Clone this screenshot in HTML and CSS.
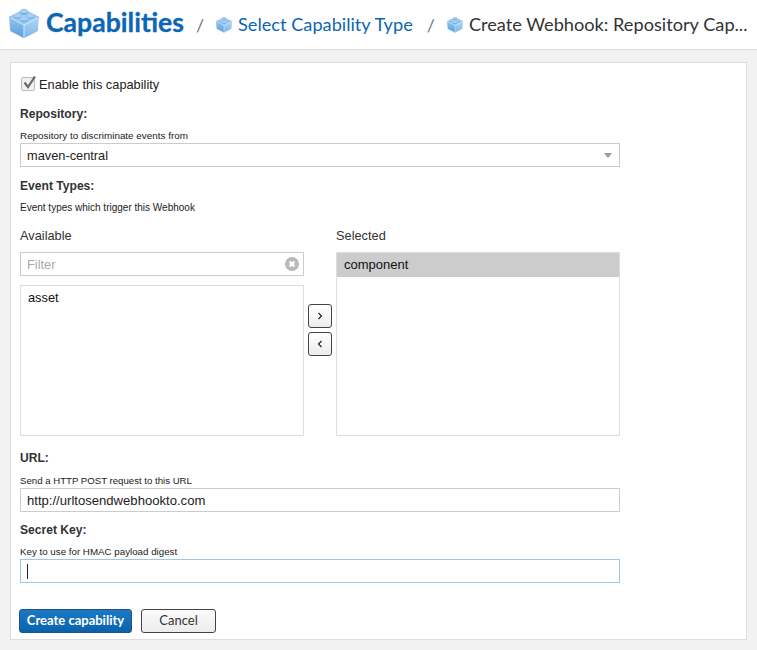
FILE: index.html
```html
<!DOCTYPE html>
<html lang="en">

<head>
    <meta charset="UTF-8">
    <title>Capabilities</title>
    <link rel="stylesheet" href="styles.css">
</head>

<body>
    <svg class="defs" width="0" height="0">
        <defs>
            <linearGradient id="brickLeft" x1="0" y1="0" x2="0" y2="1">
                <stop offset="0" stop-color="#8fc4f0"/>
                <stop offset="1" stop-color="#5c9fdd"/>
            </linearGradient>
            <linearGradient id="brickRight" x1="0" y1="0" x2="0" y2="1">
                <stop offset="0" stop-color="#b2d8f6"/>
                <stop offset="1" stop-color="#7cb5e8"/>
            </linearGradient>
            <symbol id="brick" viewBox="0 0 30 30">
                <path d="M15 1.5 L29.5 9 L15 17 L.5 9 Z" fill="#9ccaf0" stroke="#7eb2e0" stroke-width=".7"/>
                <path d="M.5 9 L15 17 V30 L1.5 23 Z" fill="url(#brickLeft)" stroke="#6fa8dc" stroke-width=".5"/>
                <path d="M29.5 9 L15 17 V30 L28.5 23 Z" fill="url(#brickRight)" stroke="#86bbe8" stroke-width=".5"/>
                <path d="M1.3 9.6 L15 17.2 L28.7 9.6 M15 17.2 V29.5" fill="none" stroke="#dff0fd" stroke-width=".9"/>
                <ellipse cx="8.5" cy="8.6" rx="3.8" ry="2.1" fill="#6fa9de"/>
                <ellipse cx="8.5" cy="7.4" rx="3.8" ry="2" fill="#a6d0f2"/>
                <ellipse cx="21.5" cy="8.6" rx="3.8" ry="2.1" fill="#6fa9de"/>
                <ellipse cx="21.5" cy="7.4" rx="3.8" ry="2" fill="#a6d0f2"/>
                <ellipse cx="15" cy="12" rx="3.8" ry="2.1" fill="#6fa9de"/>
                <ellipse cx="15" cy="10.8" rx="3.8" ry="2" fill="#a6d0f2"/>
                <ellipse cx="15" cy="4.4" rx="3.8" ry="2.1" fill="#6fa9de"/>
                <ellipse cx="15" cy="3" rx="3.8" ry="2.2" fill="#a6d0f2"/>
            </symbol>
        </defs>
    </svg>

    <div class="header">
        <svg class="icon-big"><use href="#brick"/></svg>
        <a class="title">Capabilities</a>
        <span class="sep sep-first">/</span>
        <svg class="icon-small"><use href="#brick"/></svg>
        <a class="crumb">Select Capability Type</a>
        <span class="sep">/</span>
        <svg class="icon-small"><use href="#brick"/></svg>
        <span class="crumb crumb-last">Create Webhook: Repository Cap...</span>
    </div>

    <div class="main">
        <form class="panel">
            <div class="check-row">
                <span class="checkbox">
                    <svg width="15" height="15" viewBox="0 0 15 15"><path d="M2.5 6.5 L6 11 L13 .5" fill="none" stroke="#6a6a6a" stroke-width="2.2"/></svg>
                </span>
                <span>Enable this capability</span>
            </div>

            <div class="label">Repository:</div>
            <div class="help">Repository to discriminate events from</div>
            <div class="select-box">
                <select class="field">
                    <option>maven-central</option>
                </select>
                <span class="caret"></span>
            </div>

            <div class="label label-next">Event Types:</div>
            <div class="help help-events">Event types which trigger this Webhook</div>

            <div class="transfer">
                <div class="side">
                    <div class="side-title">Available</div>
                    <div class="filter">
                        <input class="field" type="text" placeholder="Filter">
                        <svg class="clear" width="14" height="14" viewBox="0 0 14 14">
                            <circle cx="7" cy="7" r="7" fill="#b9b9b9"/>
                            <path d="M4.6 4.6 L9.4 9.4 M9.4 4.6 L4.6 9.4" stroke="#fff" stroke-width="2.2"/>
                        </svg>
                    </div>
                    <ul class="list list-short">
                        <li>asset</li>
                    </ul>
                </div>
                <div class="moves">
                    <button class="move" type="button">
                        <svg width="6" height="10" viewBox="0 0 6 10"><path d="M1.5 2 L4.5 5 L1.5 8" fill="none" stroke="#222" stroke-width="1.2"/></svg>
                    </button>
                    <button class="move" type="button">
                        <svg width="6" height="10" viewBox="0 0 6 10"><path d="M4.5 2 L1.5 5 L4.5 8" fill="none" stroke="#222" stroke-width="1.2"/></svg>
                    </button>
                </div>
                <div class="side">
                    <div class="side-title">Selected</div>
                    <ul class="list list-tall">
                        <li class="active">component</li>
                    </ul>
                </div>
            </div>

            <div class="label label-url">URL:</div>
            <div class="help help-url">Send a HTTP POST request to this URL</div>
            <input class="field field-url" type="text" value="http://urltosendwebhookto.com">

            <div class="label label-key">Secret Key:</div>
            <div class="help help-key">Key to use for HMAC payload digest</div>
            <div class="field field-focus"><span class="cursor"></span></div>

            <div class="actions">
                <button class="btn btn-primary" type="button">Create capability</button>
                <button class="btn" type="button">Cancel</button>
            </div>
        </form>
    </div>
</body>

</html>
```

FILE: styles.css
```css
* {
    padding: 0;
    margin: 0;
    box-sizing: border-box;
}

html,
body {
    height: 650px;
    overflow: hidden;
}

body {
    background-color: #f2f2f2;
    font-family: "Liberation Sans", Arial, sans-serif;
    font-size: 12.8px;
    color: #222;
}

.defs {
    position: absolute;
}

/* header */
.header {
    display: flex;
    align-items: center;
    height: 50px;
    padding-left: 9px;
    background-color: #fff;
    border-bottom: 1px solid #ddd;
    font-family: Lato, "Liberation Sans", sans-serif;
}

.icon-big {
    flex: none;
    width: 30px;
    height: 30px;
    margin-right: 7px;
    margin-bottom: 3px;
}

.icon-small {
    flex: none;
    width: 16px;
    height: 17px;
    margin-right: 6px;
}

.title {
    margin-bottom: 5px;
    font-size: 26.6px;
    font-weight: 700;
    color: #0b66b5;
    -webkit-text-stroke: .3px #0b66b5;
}

.sep {
    margin: 0 12px 0 14px;
    font-size: 18px;
    color: #777;
}

.sep-first {
    margin-left: 12px;
}

.crumb {
    margin-bottom: 1px;
    font-size: 18.2px;
    color: #0b66b5;
    white-space: nowrap;
}

.crumb-last {
    color: #333;
}

/* panel */
.main {
    padding: 12px 10px 10px;
}

.panel {
    height: 578px;
    padding: 0 9px;
    background-color: #fff;
    border: 1px solid #ddd;
}

.check-row {
    display: flex;
    align-items: center;
    height: 42px;
}

.checkbox {
    width: 14px;
    height: 14px;
    margin: 0 4px 0 1px;
    background-color: #f1f1f1;
    border: 1px solid #bbb;
    border-radius: 2px;
}

.checkbox svg {
    display: block;
    margin-top: -2px;
}

.label {
    height: 16px;
    font-size: 12.1px;
    line-height: 18px;
    font-weight: 700;
    color: #333;
}

.label-next {
    margin-top: 10px;
}

.label-url {
    margin-top: 13px;
}

.label-key {
    margin-top: 9px;
}

.help {
    height: 16px;
    margin-top: 6px;
    font-size: 9.9px;
    line-height: 18px;
    color: #222;
}

.help-events {
    font-size: 10px;
}

.help-url {
    margin-top: 7px;
    font-size: 9.65px;
}

.help-key {
    font-size: 9.75px;
}

.field {
    display: block;
    width: 600px;
    height: 24px;
    padding: 0 6px;
    background-color: #fff;
    border: 1px solid #ccc;
    border-radius: 0;
    outline: none;
    font-family: "Liberation Sans", Arial, sans-serif;
    font-size: 12.8px;
    color: #222;
    appearance: none;
}

.field-url {
    font-size: 13.1px;
}

.field-focus {
    display: flex;
    align-items: center;
    border-color: #9cc8ea;
}

.cursor {
    width: 1px;
    height: 15px;
    background-color: #222;
}

.select-box {
    position: relative;
    width: 600px;
}

.caret {
    position: absolute;
    top: 10px;
    right: 8px;
    border-top: 5px solid #999;
    border-left: 4px solid transparent;
    border-right: 4px solid transparent;
}

/* available / selected */
.transfer {
    display: grid;
    grid-template-columns: 284px 32px 284px;
    margin-top: 12px;
}

.side-title {
    height: 16px;
    margin-bottom: 9px;
    line-height: 18px;
    color: #333;
}

.filter {
    position: relative;
    margin-bottom: 9px;
}

.filter .field {
    width: 284px;
}

.filter .field::placeholder {
    color: #aaa;
    opacity: 1;
}

.clear {
    position: absolute;
    top: 5px;
    right: 5px;
}

.list {
    list-style: none;
    background-color: #fff;
    border: 1px solid #ddd;
}

.list-short {
    height: 151px;
}

.list-tall {
    height: 184px;
}

.list li {
    height: 24px;
    padding: 0 7px;
    line-height: 24px;
    color: #111;
}

.list .active {
    background-color: #ccc;
    font-size: 13px;
}

.moves {
    display: flex;
    flex-direction: column;
    align-items: center;
    gap: 4px;
    padding-top: 77px;
}

.move {
    display: flex;
    align-items: center;
    justify-content: center;
    width: 24px;
    height: 24px;
    background: linear-gradient(#fff, #ececec);
    border: 1px solid #444;
    border-radius: 3px;
}

/* buttons */
.actions {
    display: flex;
    gap: 9px;
    margin-top: 26px;
    margin-left: -1px;
}

.btn {
    width: 75px;
    height: 24px;
    padding-bottom: 2px;
    background: linear-gradient(#fbfbfb, #ececec);
    border: 1px solid #444;
    border-radius: 3px;
    font-family: Lato, "Liberation Sans", sans-serif;
    font-size: 13px;
    color: #333;
}

.btn-primary {
    width: 113px;
    background: linear-gradient(#1b7ac4, #0a62ad);
    border-color: #23527c;
    font-weight: 700;
    color: #fff;
}
```
